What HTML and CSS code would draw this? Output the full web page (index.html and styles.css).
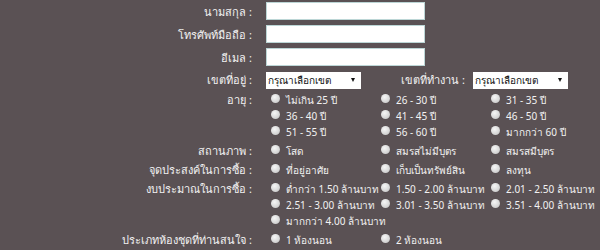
FILE: index.html
```html
<!DOCTYPE html>
<html lang="th">

<head>
    <meta charset="UTF-8">
    <meta name="viewport" content="width=device-width, initial-scale=1.0">
    <title>ลงทะเบียน</title>
    <link rel="stylesheet" href="styles.css">
</head>

<body>
    <form class="register-form">
        <label class="field-label" for="fullname">นามสกุล :</label>
        <div class="field"><input type="text" id="fullname" class="text-input"></div>

        <label class="field-label" for="mobile">โทรศัพท์มือถือ :</label>
        <div class="field"><input type="text" id="mobile" class="text-input"></div>

        <label class="field-label" for="email">อีเมล :</label>
        <div class="field"><input type="text" id="email" class="text-input"></div>

        <label class="field-label" for="home-zone">เขตที่อยู่ :</label>
        <div class="zone-row">
            <div class="select-wrap">
                <select id="home-zone" class="zone-select">
                    <option>กรุณาเลือกเขต</option>
                </select>
            </div>
            <label class="zone-label" for="work-zone">เขตที่ทำงาน :</label>
            <div class="select-wrap">
                <select id="work-zone" class="zone-select">
                    <option>กรุณาเลือกเขต</option>
                </select>
            </div>
        </div>

        <!-- radio groups -->
        <div class="field-label group-label">อายุ :</div>
        <div class="options">
            <label class="option"><input type="radio" name="age"> ไม่เกิน 25 ปี</label>
            <label class="option"><input type="radio" name="age"> 26 - 30 ปี</label>
            <label class="option"><input type="radio" name="age"> 31 - 35 ปี</label>
            <label class="option"><input type="radio" name="age"> 36 - 40 ปี</label>
            <label class="option"><input type="radio" name="age"> 41 - 45 ปี</label>
            <label class="option"><input type="radio" name="age"> 46 - 50 ปี</label>
            <label class="option"><input type="radio" name="age"> 51 - 55 ปี</label>
            <label class="option"><input type="radio" name="age"> 56 - 60 ปี</label>
            <label class="option"><input type="radio" name="age"> มากกว่า 60 ปี</label>
        </div>

        <div class="field-label group-label">สถานภาพ :</div>
        <div class="options">
            <label class="option"><input type="radio" name="status"> โสด</label>
            <label class="option"><input type="radio" name="status"> สมรสไม่มีบุตร</label>
            <label class="option"><input type="radio" name="status"> สมรสมีบุตร</label>
        </div>

        <div class="field-label group-label">จุดประสงค์ในการซื้อ :</div>
        <div class="options">
            <label class="option"><input type="radio" name="purpose"> ที่อยู่อาศัย</label>
            <label class="option"><input type="radio" name="purpose"> เก็บเป็นทรัพย์สิน</label>
            <label class="option"><input type="radio" name="purpose"> ลงทุน</label>
        </div>

        <div class="field-label group-label">งบประมาณในการซื้อ :</div>
        <div class="options">
            <label class="option"><input type="radio" name="budget"> ต่ำกว่า 1.50 ล้านบาท</label>
            <label class="option"><input type="radio" name="budget"> 1.50 - 2.00 ล้านบาท</label>
            <label class="option"><input type="radio" name="budget"> 2.01 - 2.50 ล้านบาท</label>
            <label class="option"><input type="radio" name="budget"> 2.51 - 3.00 ล้านบาท</label>
            <label class="option"><input type="radio" name="budget"> 3.01 - 3.50 ล้านบาท</label>
            <label class="option"><input type="radio" name="budget"> 3.51 - 4.00 ล้านบาท</label>
            <label class="option"><input type="radio" name="budget"> มากกว่า 4.00 ล้านบาท</label>
        </div>

        <div class="field-label group-label">ประเภทห้องชุดที่ท่านสนใจ :</div>
        <div class="options">
            <label class="option"><input type="radio" name="room"> 1 ห้องนอน</label>
            <label class="option"><input type="radio" name="room"> 2 ห้องนอน</label>
        </div>
    </form>
</body>

</html>
```

FILE: styles.css
```css
body {
    margin: 0;
    background-color: #5a5154;
    font-family: "Noto Sans", "DejaVu Sans", sans-serif;
    font-size: 11px;
    color: #f2f2f2;
}

.register-form {
    display: grid;
    grid-template-columns: 252px 1fr;
    column-gap: 14px;
    row-gap: 3px;
    padding-top: 2px;
    align-items: center;
}

.field-label {
    text-align: right;
    white-space: nowrap;
    line-height: 16px;
}

.group-label {
    align-self: start;
}

.field {
    margin-bottom: 2px;
}

.text-input {
    display: block;
    box-sizing: border-box;
    width: 159px;
    height: 18px;
    margin: 0;
    border: 1px solid #bcd6d6;
    background: #fff;
}

.zone-row {
    display: flex;
    align-items: center;
}

.zone-label {
    width: 104px;
    margin-right: 8px;
    text-align: right;
    white-space: nowrap;
}

.select-wrap {
    position: relative;
}

.select-wrap::after {
    content: "";
    position: absolute;
    right: 6px;
    top: 6px;
    border-left: 2.5px solid transparent;
    border-right: 2.5px solid transparent;
    border-top: 4px solid #111;
    pointer-events: none;
}

.zone-select {
    display: block;
    appearance: none;
    -webkit-appearance: none;
    box-sizing: border-box;
    width: 95px;
    height: 17px;
    margin: 0;
    padding: 0 0 0 2px;
    border: none;
    border-radius: 0;
    background: #fff;
    color: #111;
    font-family: inherit;
    font-size: 10px;
}

.options {
    display: grid;
    grid-template-columns: repeat(3, 110px);
    padding-left: 5px;
    align-self: start;
    font-size: 10px;
    line-height: 16px;
}

.options .option {
    display: flex;
    align-items: center;
    height: 16px;
    white-space: nowrap;
}

.option input {
    flex: none;
    appearance: none;
    -webkit-appearance: none;
    width: 9px;
    height: 9px;
    margin: 0 6px 3px 0;
    border-radius: 50%;
    background: radial-gradient(circle at 40% 35%, #f6f6f6 0%, #dcdcdc 50%, #bdbdbd 100%);
}
```
